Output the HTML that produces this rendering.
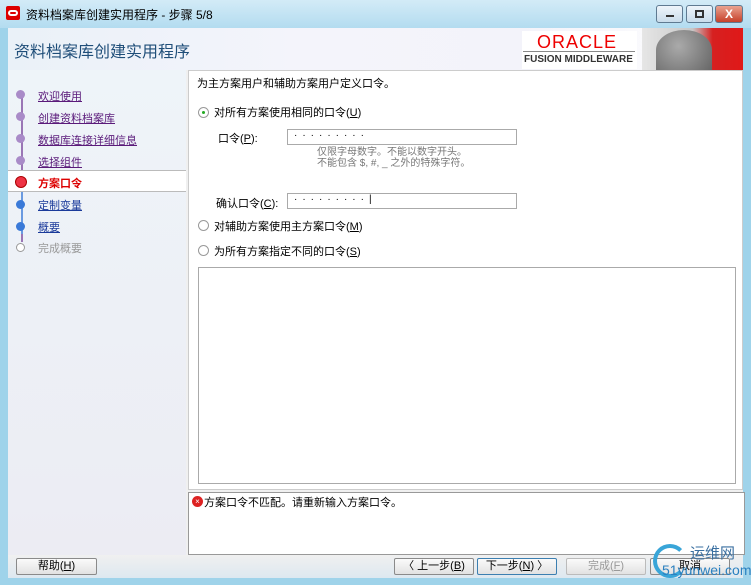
<!DOCTYPE html>
<html><head><meta charset="utf-8"><style>
*{margin:0;padding:0;box-sizing:border-box}
body{width:751px;height:585px;overflow:hidden;font-family:"Liberation Sans","Noto Sans CJK SC",sans-serif;font-size:12px;background:#9fd3ea;position:relative}
.abs{position:absolute}
.title{left:0;top:0;width:751px;height:28px;background:linear-gradient(#d3ebf7,#b3dcf0)}
.tb{top:5px;height:18px;border:1px solid #5f7a91;border-radius:3px;background:linear-gradient(#eef5fb,#c9dceb)}
.content{left:8px;top:28px;width:735px;height:550px;background:#f0f0f0}
.hdr{left:8px;top:28px;width:735px;height:42px;background:linear-gradient(90deg,#eaf1f8,#f4f4fb 40%,#f3f3fa 70%,#fff)}
.left{left:8px;top:70px;width:178px;height:485px;background:linear-gradient(#eef4f9,#ececf3)}
.right{left:188px;top:70px;width:555px;height:420px;background:#fff;border:1px solid #ccc}
.step{left:38px;font-size:11px;color:#5a1a7a;text-decoration:underline}
.dot{left:16px;width:9px;height:9px;border-radius:50%}
.inp{left:287px;width:230px;height:16px;border:1px solid #aaa;background:#fff;font-size:10px;padding-left:6px;letter-spacing:5px;line-height:12px}
.radio{left:198px;width:11px;height:11px;border:1px solid #999;border-radius:50%;background:#fff}
.btn{top:558px;height:17px;border:1px solid #8a8a8a;border-radius:2px;background:linear-gradient(#fafafa,#e2e2e2);font-size:11px;text-align:center;line-height:15px}
</style></head><body>
<div class="abs title"></div>
<div class="abs" style="left:6px;top:6px;width:14px;height:14px;background:#d00;border-radius:2px"><div style="margin:4px 2px;width:10px;height:6px;border:2px solid #fff;border-radius:3px"></div></div>
<div class="abs" style="left:26px;top:6px;font-size:12px;color:#000">资料档案库创建实用程序 - 步骤 5/8</div>
<div class="abs tb" style="left:656px;width:27px"><div style="margin:9px 9px;width:8px;height:2px;background:#333"></div></div>
<div class="abs tb" style="left:686px;width:27px"><div style="margin:4px 8px;width:9px;height:8px;border:2px solid #333"></div></div>
<div class="abs tb" style="left:715px;width:28px;background:linear-gradient(#e9a28f,#c7412a);color:#fff;font-weight:bold;text-align:center;line-height:16px">X</div>
<div class="abs content"></div>
<div class="abs hdr"></div>
<div class="abs" style="left:14px;top:38px;font-size:16px;color:#1f4e79">资料档案库创建实用程序</div>
<div class="abs" style="left:522px;top:31px;width:115px;height:38px;background:#fff"></div>
<div class="abs" style="left:537px;top:32px;font-size:18px;color:#e00;letter-spacing:1px">ORACLE</div>
<div class="abs" style="left:523px;top:51px;width:112px;height:1px;background:#888"></div>
<div class="abs" style="left:524px;top:54px;font-size:10px;font-weight:bold;color:#333">FUSION MIDDLEWARE</div>
<div class="abs" style="left:642px;top:28px;width:101px;height:42px;background:linear-gradient(90deg,#e6e6e6,#c8c8c8 50%,#d62020 70%,#e01818)"></div>
<div class="abs" style="left:656px;top:30px;width:56px;height:40px;border-radius:50% 50% 0 0;background:radial-gradient(circle at 40% 40%,#aaa,#666)"></div>
<div class="abs left"></div>
<div class="abs" style="left:21px;top:92px;width:2px;height:150px;background:#9a76b5"></div>
<div class="abs" style="left:21px;top:182px;width:2px;height:52px;background:#6a9ae0"></div>
<div class="abs dot" style="top:90px;background:#a98bc8"></div><div class="abs step" style="top:88px">欢迎使用</div>
<div class="abs dot" style="top:112px;background:#a98bc8"></div><div class="abs step" style="top:110px">创建资料档案库</div>
<div class="abs dot" style="top:134px;background:#a98bc8"></div><div class="abs step" style="top:132px">数据库连接详细信息</div>
<div class="abs dot" style="top:156px;background:#a98bc8"></div><div class="abs step" style="top:154px">选择组件</div>
<div class="abs" style="left:8px;top:170px;width:178px;height:22px;background:#fff;border-top:1px solid #bbb;border-bottom:1px solid #bbb"></div>
<div class="abs" style="left:15px;top:176px;width:12px;height:12px;border-radius:50%;background:#e34;border:1px solid #a00"></div>
<div class="abs" style="left:38px;top:175px;font-size:11px;color:#d00;font-weight:bold">方案口令</div>
<div class="abs dot" style="top:200px;background:#3a7ad8"></div><div class="abs step" style="top:197px;color:#1a3a9a">定制变量</div>
<div class="abs dot" style="top:222px;background:#3a7ad8"></div><div class="abs step" style="top:219px;color:#1a3a9a">概要</div>
<div class="abs dot" style="top:243px;background:#fff;border:1px solid #999"></div><div class="abs" style="left:38px;top:240px;font-size:11px;color:#999">完成概要</div>
<div class="abs right"></div>
<div class="abs" style="left:197px;top:75px;font-size:11px">为主方案用户和辅助方案用户定义口令。</div>
<div class="abs radio" style="top:107px"><div style="margin:3px;width:3px;height:3px;border-radius:50%;background:#2a2"></div></div>
<div class="abs" style="left:214px;top:104px;font-size:11px">对所有方案使用相同的口令(<u>U</u>)</div>
<div class="abs" style="left:218px;top:130px;font-size:11px">口令(<u>P</u>):</div>
<div class="abs inp" style="top:129px">·········</div>
<div class="abs" style="left:317px;top:147px;font-size:10px;color:#777;line-height:11px">仅限字母数字。不能以数字开头。<br>不能包含 $, #, _ 之外的特殊字符。</div>
<div class="abs" style="left:216px;top:195px;font-size:11px">确认口令(<u>C</u>):</div>
<div class="abs inp" style="top:193px">·········|</div>
<div class="abs radio" style="top:220px"></div>
<div class="abs" style="left:214px;top:218px;font-size:11px">对辅助方案使用主方案口令(<u>M</u>)</div>
<div class="abs radio" style="top:245px"></div>
<div class="abs" style="left:214px;top:243px;font-size:11px">为所有方案指定不同的口令(<u>S</u>)</div>
<div class="abs" style="left:198px;top:267px;width:538px;height:217px;border:1px solid #aaa;background:#fff"></div>
<div class="abs" style="left:188px;top:492px;width:557px;height:63px;border:1px solid #999;background:#fff"></div>
<div class="abs" style="left:192px;top:496px;width:11px;height:11px;border-radius:50%;background:#d22;color:#fff;font-size:8px;text-align:center;line-height:11px">×</div>
<div class="abs" style="left:204px;top:494px;font-size:11px">方案口令不匹配。请重新输入方案口令。</div>
<div class="abs" style="left:8px;top:555px;width:735px;height:23px;background:linear-gradient(#f0f0f0,#dde8f0)"></div>
<div class="abs btn" style="left:16px;width:81px">帮助(<u>H</u>)</div>
<div class="abs btn" style="left:394px;width:80px">〈 上一步(<u>B</u>)</div>
<div class="abs btn" style="left:477px;width:80px;border-color:#3c7fb1">下一步(<u>N</u>) 〉</div>
<div class="abs btn" style="left:566px;width:80px;color:#999;border-color:#bbb">完成(<u>F</u>)</div>
<div class="abs btn" style="left:650px;width:80px">取消</div>
<div class="abs" style="left:653px;top:544px;width:34px;height:34px;border-radius:50%;border:4px solid #39a5d8;border-right-color:transparent"></div>
<div class="abs" style="left:690px;top:542px;font-size:15px;color:#3a6fa0">运维网</div>
<div class="abs" style="left:662px;top:562px;font-size:14px;color:#2a80c0">51yunwei.com</div>
</body></html>
